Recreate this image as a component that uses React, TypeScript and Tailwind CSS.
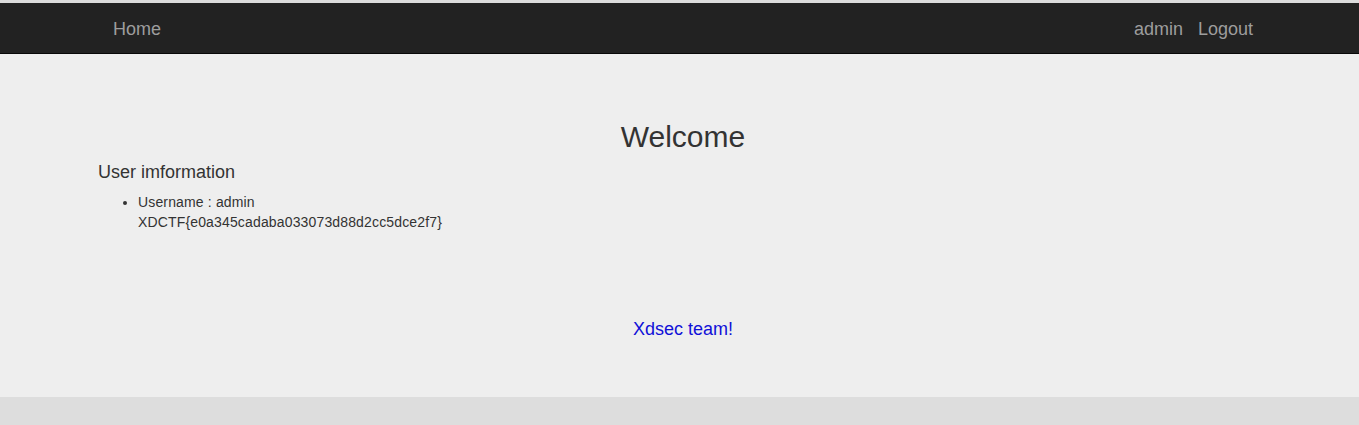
export default function App() {
	const navLink = `px-[7px] text-[18px] leading-[52px] text-[#9d9d9d]`;

	return (
		<div className="w-full min-h-[425px] bg-[#dddddd] font-['Liberation_Sans',Arial,sans-serif] text-[#333333]">
			<div className="h-[3px] bg-[#dcdcdc]" />
			<nav className="h-[51px] bg-[#222222] border-b border-[#080808]">
				<div className="ml-[98px] w-[1170px] px-[15px] flex justify-between">
					<a className="text-[18px] leading-[52px] text-[#9d9d9d]">Home</a>
					<div className="flex -mr-[7px]">
						<a className={navLink + " pr-[8px]"}>admin</a>
						<a className={navLink}>Logout</a>
					</div>
				</div>
			</nav>
			<main className="h-[343px] bg-[#eeeeee]">
				<div className="ml-[98px] w-[1170px] pt-[66px]">
					<h1 className="text-center text-[30px] leading-[33px]">Welcome</h1>
					<h3 className="mt-[9px] text-[18px] leading-[20px]">User imformation</h3>
					<ul className="mt-[10px] pl-[40px] list-disc text-[14px] leading-[20px] tracking-[0.15px]">
						<li>
							Username : admin
							<br />
							XDCTF{"{"}e0a345cadaba033073d88d2cc5dce2f7{"}"}
						</li>
					</ul>
					<p className="mt-[87px] text-center text-[18px] leading-[20px] text-[#1010d8]">
						Xdsec team!
					</p>
				</div>
			</main>
		</div>
	);
}
